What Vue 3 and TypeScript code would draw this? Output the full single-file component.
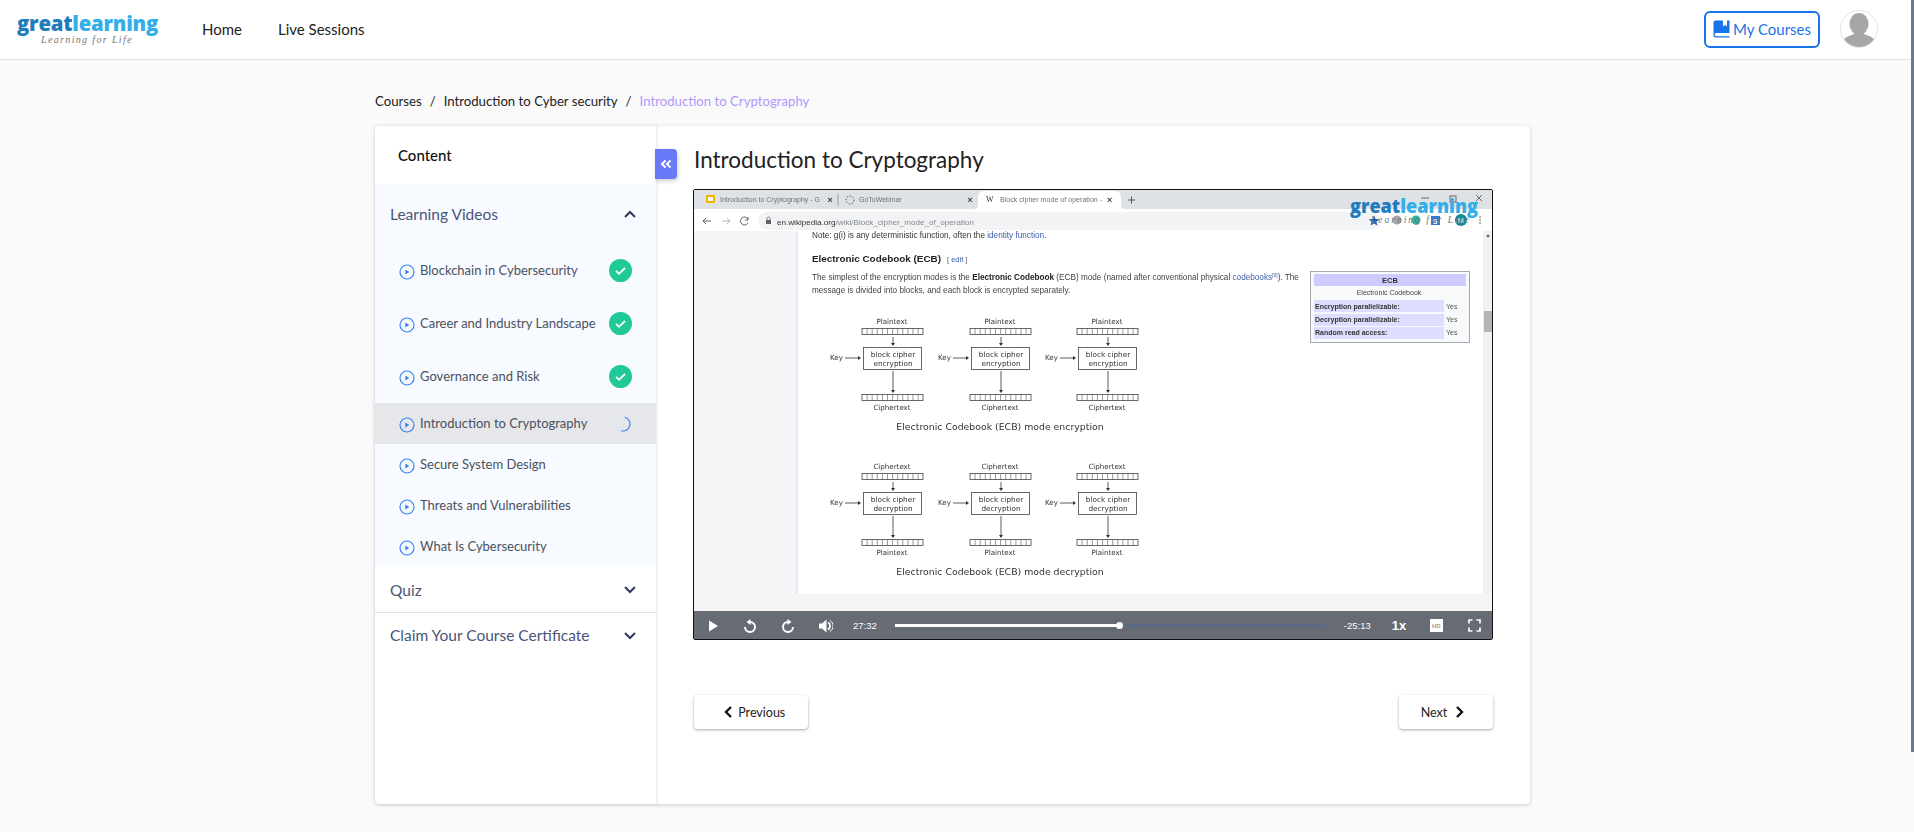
<script setup lang="ts">
const lessons = [
  { title: 'Blockchain in Cybersecurity', state: 'done' },
  { title: 'Career and Industry Landscape', state: 'done' },
  { title: 'Governance and Risk', state: 'done' },
  { title: 'Introduction to Cryptography', state: 'active' },
  { title: 'Secure System Design', state: '' },
  { title: 'Threats and Vulnerabilities', state: '' },
  { title: 'What Is Cybersecurity', state: '' },
]
const columns = [892, 1000, 1107]
const rows = [
  { y: 321, top: 'Plaintext', bottom: 'Ciphertext', op: 'encryption', caption: 'Electronic Codebook (ECB) mode encryption' },
  { y: 466, top: 'Ciphertext', bottom: 'Plaintext', op: 'decryption', caption: 'Electronic Codebook (ECB) mode decryption' },
]
const ticks = Array.from({ length: 11 }, (_, i) => (i + 1) * 5.1)
</script>

<template>
  <div class="page">
    <header class="topbar">
      <div class="left">
        <div class="logo">
          <div class="logo-main"><span class="great">great</span><span class="learning">learning</span></div>
          <div class="logo-tag">Learning for Life</div>
        </div>
        <nav class="nav">
          <a>Home</a>
          <a>Live Sessions</a>
        </nav>
      </div>
      <div class="right">
        <button class="courses">
          <svg width="17" height="18" viewBox="0 0 17 18"><path d="M2.500 0.500H10v6l2-1.500 2 1.500V0.500h2.500V13H3.200a1.600 1.600 0 0 0 0 3.200H16.500v1.300H2.500a2 2 0 0 1-2-2V2.500a2 2 0 0 1 2-2z" fill="#1a73e8"/></svg>
          <span>My Courses</span>
        </button>
        <div class="avatar">
          <svg width="36" height="36" viewBox="0 0 36 36">
            <defs><clipPath id="av"><circle cx="18" cy="18" r="18"/></clipPath></defs>
            <g clip-path="url(#av)" fill="#a6a6a6">
              <ellipse cx="18" cy="13" rx="9.500" ry="11"/>
              <path d="M0 36c0-7 4-10 13-13h10c9 3 13 6 13 13z"/>
            </g>
          </svg>
        </div>
      </div>
    </header>

    <main class="body">
      <div class="crumbs">
        <span>Courses</span><i>/</i><span>Introduction to Cyber security</span><i>/</i><span class="current">Introduction to Cryptography</span>
      </div>
      <section class="card">
        <aside class="side">
          <div class="side-head">Content</div>
          <div class="group open">
            <div class="group-title">
              <span>Learning Videos</span>
              <svg class="chev" width="14" height="9" viewBox="0 0 14 9"><path d="M2 7l5-5 5 5" fill="none" stroke="#2f3b5c" stroke-width="2"/></svg>
            </div>
            <ul class="lessons">
              <li v-for="l in lessons" :key="l.title" class="lesson" :class="[l.state]">
                <svg class="play" width="16" height="16" viewBox="0 0 16 16"><circle cx="8" cy="8" r="7" fill="none" stroke="#3b82f6" stroke-width="1.200"/><path d="M6.300 5.500v5l4-2.500z" fill="#3b82f6"/></svg>
                <span class="lesson-name">{{ l.title }}</span>
                <svg v-if="l.state === 'done'" class="check" width="23" height="23" viewBox="0 0 23 23"><circle cx="11.500" cy="11.500" r="11.500" fill="#20c997"/><path d="M7 11.800l3 3 6-5.800" fill="none" stroke="#fff" stroke-width="1.800"/></svg>
                <svg v-if="l.state === 'active'" class="spin" width="16" height="16" viewBox="0 0 16 16"><circle cx="8" cy="8" r="7" fill="none" stroke="#dbe6f7" stroke-width="1.200"/><path d="M8 1a7 7 0 0 1 0 14" fill="none" stroke="#3b82f6" stroke-width="1.200" transform="rotate(15 8 8)"/></svg>
              </li>
            </ul>
          </div>
          <div class="group-title closed">
            <span>Quiz</span>
            <svg class="chev" width="14" height="9" viewBox="0 0 14 9"><path d="M2 2l5 5 5-5" fill="none" stroke="#2f3b5c" stroke-width="2"/></svg>
          </div>
          <div class="group-title closed">
            <span>Claim Your Course Certificate</span>
            <svg class="chev" width="14" height="9" viewBox="0 0 14 9"><path d="M2 2l5 5 5-5" fill="none" stroke="#2f3b5c" stroke-width="2"/></svg>
          </div>
          <button class="collapse"><svg width="12" height="10" viewBox="0 0 12 10"><path d="M5.500 1.500L2 5l3.500 3.500M10.500 1.500L7 5l3.500 3.500" fill="none" stroke="#fff" stroke-width="2"/></svg></button>
        </aside>

        <div class="content">
          <h1>Introduction to Cryptography</h1>
          <div class="player">
            <svg class="frame" width="798" height="421" viewBox="694 190 798 421">
              <defs>
                <filter id="soft" x="-2%" y="-2%" width="104%" height="104%"><feGaussianBlur stdDeviation="0.42"/></filter>
              </defs>
              <g filter="url(#soft)" font-family="'Liberation Sans', Arial, sans-serif">
                <rect x="694" y="190" width="798" height="421" fill="#ffffff"/>
                <rect x="694" y="190" width="798" height="19" fill="#dee1e6"/>
                <path d="M974 209c4 0 4-3 4-6v-6c0-4 3-6 6-6h131c3 0 6 2 6 6v6c0 3 0 6 4 6z" fill="#fff"/>
                <rect x="706" y="195" width="9" height="8" rx="1" fill="#f4b400"/><rect x="708" y="197" width="5" height="4" fill="#fff"/>
                <text x="720" y="202" font-size="7" fill="#6f7377">Introduction to Cryptography - G</text>
                <text x="827.500" y="203" font-size="9" font-weight="700" fill="#444">×</text>
                <path d="M838 194v12" stroke="#9aa0a6"/>
                <circle cx="850" cy="200" r="4" fill="none" stroke="#555" stroke-dasharray="1.500 1.500"/>
                <text x="859" y="202" font-size="7" fill="#6f7377">GoToWebinar</text>
                <text x="967.500" y="203" font-size="9" font-weight="700" fill="#444">×</text>
                <text x="986" y="202" font-size="8" font-family="'Liberation Serif', serif" fill="#333">W</text>
                <text x="1000" y="202" font-size="7.100" fill="#6f7377">Block cipher mode of operation -</text>
                <text x="1107" y="203" font-size="9" font-weight="700" fill="#444">×</text>
                <path d="M1128 200h7M1131.500 196.500v7" stroke="#555" stroke-width="1"/>
                <rect x="694" y="209" width="798" height="22" fill="#fff"/>
                <rect x="758" y="212" width="622" height="18" rx="9" fill="#f1f3f4"/>
                <path d="M703 221h8M703 221l3-3M703 221l3 3" stroke="#5f6368" fill="none"/>
                <path d="M722 221h8M730 221l-3-3M730 221l-3 3" stroke="#b5b8bb" fill="none"/>
                <path d="M748 219a4 4 0 1 0 0 4M748 217v3h-3" stroke="#5f6368" fill="none"/>
                <rect x="766" y="220" width="5" height="4" fill="#5f6368"/><path d="M767 220v-1.500a1.500 1.500 0 0 1 3 0v1.500" stroke="#5f6368" fill="none" stroke-width="0.800"/>
                <text x="777" y="224.500" font-size="8.100"><tspan fill="#333">en.wikipedia.org</tspan><tspan fill="#85888c">/wiki/Block_cipher_mode_of_operation</tspan></text>
                <path d="M1374 215.500l1.500 3.500 3.800.3-2.900 2.400 1 3.700-3.400-2-3.400 2 1-3.700-2.900-2.400 3.800-.3z" fill="#1a62c4"/>
                <circle cx="1397" cy="220" r="4.500" fill="#a5a5a5"/>
                <circle cx="1416" cy="220" r="4.500" fill="#2bb59a"/>
                <rect x="1431" y="216" width="9" height="9" fill="#2b7cd3"/><text x="1433" y="224" font-size="7" font-weight="700" fill="#fff">S</text>
                <circle cx="1461" cy="220" r="6" fill="#0f8a99"/><text x="1458" y="223" font-size="7" fill="#fff">M</text>
                <circle cx="1480" cy="217" r=".8" fill="#555"/><circle cx="1480" cy="220" r=".8" fill="#555"/><circle cx="1480" cy="223" r=".8" fill="#555"/>
                <path d="M1421 198h8" stroke="#666"/><rect x="1450" y="196" width="6" height="6" fill="none" stroke="#666"/><path d="M1476 195l6 6M1482 195l-6 6" stroke="#666"/>

                <rect x="694" y="231" width="102.500" height="380" fill="#f4f3f6"/>
                <path d="M797 231v363" stroke="#e4ebf7" stroke-width="2"/>
                <rect x="694" y="594" width="798" height="17" fill="#f4f3f6"/>
                <rect x="1483" y="231" width="9" height="363" fill="#f1f1f1"/>
                <rect x="1484" y="311" width="8" height="21" fill="#b5b5b5"/>
                <path d="M1488 234l-2 3h4z" fill="#666"/>

                <text x="812" y="238" font-size="8.200" fill="#333">Note: g(i) is any deterministic function, often the <tspan fill="#3b5ea8">identity function</tspan>.</text>
                <text x="812" y="262" font-size="9.900" font-weight="700" fill="#222">Electronic Codebook (ECB)</text>
                <text x="947" y="262" font-size="7.500" fill="#666">[ <tspan fill="#3b5ea8">edit</tspan> ]</text>
                <text x="812" y="280" font-size="8.200" fill="#444">The simplest of the encryption modes is the <tspan font-weight="700" fill="#222">Electronic Codebook</tspan> (ECB) mode (named after conventional physical <tspan fill="#3b5ea8">codebooks</tspan><tspan font-size="5" dy="-3" fill="#3b5ea8">[9]</tspan><tspan dy="3">). The</tspan></text>
                <text x="812" y="293" font-size="8.200" fill="#444">message is divided into blocks, and each block is encrypted separately.</text>

                <rect x="1310.500" y="271.500" width="159" height="71" fill="#f8f9fa" stroke="#a2a9b1"/>
                <rect x="1314" y="274" width="152" height="12" fill="#ccccff"/>
                <text x="1390" y="283" font-size="7.500" font-weight="700" text-anchor="middle" fill="#333">ECB</text>
                <text x="1389" y="295" font-size="7" text-anchor="middle" fill="#444">Electronic Codebook</text>
                <rect x="1314" y="300" width="130" height="12" fill="#ddddff"/>
                <rect x="1314" y="314" width="130" height="12" fill="#ddddff"/>
                <rect x="1314" y="327" width="130" height="12" fill="#ddddff"/>
                <g font-size="7" fill="#333" font-weight="700">
                  <text x="1315" y="309">Encryption parallelizable:</text>
                  <text x="1315" y="322">Decryption parallelizable:</text>
                  <text x="1315" y="335">Random read access:</text>
                </g>
                <g font-size="7" fill="#555">
                  <text x="1446" y="309">Yes</text><text x="1446" y="322">Yes</text><text x="1446" y="335">Yes</text>
                </g>

                <g v-for="r in rows" :key="r.y" font-family="'DejaVu Sans', sans-serif">
                  <g v-for="c in columns" :key="c" :transform="`translate(${c} ${r.y})`" fill="#333">
                    <text x="0" y="3" font-size="7.100" text-anchor="middle">{{ r.top }}</text>
                    <rect x="-30" y="7.500" width="61" height="6" fill="#fff" stroke="#444" stroke-width=".8"/>
                    <path v-for="t in ticks" :key="t" :d="`M${t - 30} 7.500v6`" stroke="#555" stroke-width=".6"/>
                    <path d="M1 16v7" stroke="#333" stroke-width=".8"/><path d="M-1 22l2 3 2-3z"/>
                    <rect x="-28.500" y="26.500" width="58" height="22" fill="#fff" stroke="#444" stroke-width=".8"/>
                    <text x="1" y="35.500" font-size="7.300" text-anchor="middle">block cipher</text>
                    <text x="1" y="44.500" font-size="7.300" text-anchor="middle">{{ r.op }}</text>
                    <text x="-62" y="39" font-size="7.100">Key</text>
                    <path d="M-47 37h14" stroke="#333" stroke-width=".8"/><path d="M-34 35l3 2-3 2z"/>
                    <path d="M1 50v20" stroke="#333" stroke-width=".8"/><path d="M-1 69l2 3 2-3z"/>
                    <rect x="-30" y="73.500" width="61" height="6" fill="#fff" stroke="#444" stroke-width=".8"/>
                    <path v-for="t in ticks" :key="t" :d="`M${t - 30} 73.500v6`" stroke="#555" stroke-width=".6"/>
                    <text x="0" y="89" font-size="7.100" text-anchor="middle">{{ r.bottom }}</text>
                  </g>
                  <text x="1000" :y="r.y + 109" font-size="9.350" text-anchor="middle" fill="#333">{{ r.caption }}</text>
                </g>
              </g>
              <g font-family="'Open Sans', 'Liberation Sans', sans-serif" font-weight="800">
                <text x="1350" y="213" font-size="19.500" fill="#1f7cbd" textLength="128" lengthAdjust="spacingAndGlyphs"><tspan>great</tspan><tspan fill="#33aee8">learning</tspan></text>
              </g>
              <text x="1371" y="223" font-size="9.500" font-style="italic" font-family="'Liberation Serif', serif" letter-spacing="2" fill="#777">Learning for Life</text>
            </svg>
            <div class="controls">
              <svg class="ctl" width="12" height="12" viewBox="0 0 12 12"><path d="M2 .5l9 5.500-9 5.500z" fill="#fff"/></svg>
              <svg class="ctl" width="14" height="16" viewBox="0 0 14 16"><path d="M7 4a5 5 0 1 1-5 5" fill="none" stroke="#fff" stroke-width="2"/><path d="M7.500 1v6L3.500 4z" fill="#fff"/></svg>
              <svg class="ctl" width="14" height="16" viewBox="0 0 14 16"><path d="M7 4a5 5 0 1 0 5 5" fill="none" stroke="#fff" stroke-width="2"/><path d="M6.500 1v6l4-3z" fill="#fff"/></svg>
              <svg class="ctl" width="14" height="14" viewBox="0 0 14 14"><path d="M0 4.500h3l4.500-4v13l-4.500-4H0z" fill="#fff"/><path d="M9 3.500a4 4 0 0 1 0 7" fill="none" stroke="#fff" stroke-width="1.800"/><path d="M11 1.500a6.500 6.500 0 0 1 0 11" fill="none" stroke="#fff" stroke-width="1"/></svg>
              <span class="time first">27:32</span>
              <div class="track"><div class="fill" :style="{ width: '52%' }"></div><div class="knob"></div></div>
              <span class="time">-25:13</span>
              <span class="speed">1x</span>
              <span class="hd">HD</span>
              <svg class="full" width="13" height="13" viewBox="0 0 13 13"><path d="M1 4.500V1h3.500M8.500 1H12v3.500M12 8.500V12H8.500M4.500 12H1V8.500" fill="none" stroke="#fff" stroke-width="1.700"/></svg>
            </div>
          </div>
          <div class="pager">
            <button class="pg prev"><svg width="9" height="12" viewBox="0 0 9 12"><path d="M7 1L2 6l5 5" fill="none" stroke="#111" stroke-width="2.400"/></svg>Previous</button>
            <button class="pg next">Next<svg width="9" height="12" viewBox="0 0 9 12"><path d="M2 1l5 5-5 5" fill="none" stroke="#111" stroke-width="2.400"/></svg></button>
          </div>
        </div>
      </section>
    </main>
    <div class="scrollbar"></div>
  </div>
</template>

<style>
html, body { margin: 0; overflow: hidden; }
</style>

<style scoped>
* { box-sizing: border-box; }
.page { width: 1914px; height: 832px; position: relative; background: #fafafb; font-family: Lato, "Liberation Sans", sans-serif; overflow: hidden; }
.topbar { height: 60px; background: #fff; border-bottom: 1px solid #e0e0e0; display: flex; justify-content: space-between; align-items: center; padding: 0 36px 1px 17px; }
.left, .right { display: flex; align-items: center; }
.logo { width: 143px; display: flex; flex-direction: column; align-items: flex-start; margin-top: -2px; }
.logo-main { font-family: "Open Sans", sans-serif; font-weight: 800; font-size: 20.300px; line-height: 22px; letter-spacing: -0.2px; white-space: nowrap; }
.great { color: #1f7cbd; }
.learning { color: #33aee8; }
.logo-tag { font-family: "Liberation Serif", serif; font-style: italic; font-size: 10px; line-height: 11px; letter-spacing: 1.350px; color: #777; margin: 0 0 0 24px; }
.nav { display: flex; gap: 36px; margin-left: 42px; font-size: 15px; color: #222; }
.right { gap: 20px; }
.courses { width: 116px; height: 37px; border: 2px solid #1a73e8; border-radius: 6px; background: #fff; color: #1a73e8; font: 15px Lato, sans-serif; display: flex; align-items: center; gap: 3px; padding: 0 0 0 7px; }
.avatar { width: 38px; height: 38px; border: 1px solid #e5e5e5; border-radius: 50%; }
.avatar svg { display: block; }
.body { padding: 0 0 0 375px; }
.crumbs { height: 66px; display: flex; align-items: center; font-size: 13.200px; color: #222; padding-top: 15px; }
.crumbs i { font-style: normal; margin: 0 8px; }
.current { color: #b197fc; }
.card { width: 1155px; height: 678px; background: #fff; border-radius: 4px; box-shadow: 0 1px 4px rgba(0, 0, 0, .18); display: flex; }
.side { width: 282px; flex: none; position: relative; border-right: 1px solid #edeef2; box-shadow: 1px 0 3px rgba(0, 0, 0, .06); }
.side-head { height: 58px; padding: 20px 0 0 23px; font-size: 15px; font-weight: 500; color: #111; line-height: 18px; }
.group.open { background: #f7faff; height: 383px; }
.group-title { display: flex; justify-content: space-between; align-items: center; padding: 0 19px 0 15px; font-size: 15.500px; color: #4a5578; }
.open .group-title { height: 60px; }
.group-title.closed { height: 45px; }
.group-title.closed + .group-title.closed { border-top: 1px solid #dfe1e6; }
.lessons { list-style: none; margin: 0; padding: 0; }
.lesson { display: flex; align-items: center; color: #4b5160; font-size: 13px; padding: 0 25px 0 24px; height: 41px; }
.lesson.done { height: 53px; }
.lesson.active { background: #e5e7eb; }
.lesson-name { margin-left: 5px; flex: 1; white-space: nowrap; margin-top: -1px; }
.play { flex: none; margin-top: 2px; }
.check { margin-top: -1px; margin-right: -1px; flex: none; }
.collapse { position: absolute; left: 280px; top: 23px; width: 22px; height: 30px; border: 0; padding: 0; background: #6979f8; border-radius: 0 4px 4px 0; box-shadow: 1px 2px 4px rgba(0, 0, 0, .2); display: flex; align-items: center; justify-content: center; }
.content { flex: 1; padding: 0 0 0 36px; }
h1 { margin: 0 0 0 1px; height: 63px; padding-top: 19px; font-size: 22.500px; line-height: 30px; font-weight: 400; color: #222; }
.player { width: 800px; height: 451px; border: 1px solid #111; border-radius: 2px; overflow: hidden; background: #fff; }
.frame { display: block; }
.controls { height: 29px; background: #676b74; display: flex; align-items: center; color: #fff; font-family: "Liberation Sans", sans-serif; }
.ctl { margin-left: 13px; flex: none; margin-right: 11px; }
.time { font-size: 9.500px; }
.time.first { margin-left: 9px; }
.track { width: 430px; height: 3px; background: #5a6a85; margin: 0 19px 0 18px; position: relative; }
.fill { height: 3px; background: #fff; }
.knob { position: absolute; left: 221px; top: -2px; width: 7px; height: 7px; border-radius: 50%; background: #fff; }
.speed { font-size: 13px; font-weight: 700; margin-left: 21px; width: 38px; }
.hd { width: 13px; height: 13px; background: #fff; color: #999; font-size: 6px; font-weight: 700; display: flex; align-items: center; justify-content: center; }
.full { margin-left: 25px; }
.pager { display: flex; justify-content: space-between; margin: 55px 0 0 1px; width: 799px; }
.pg { height: 34px; background: #fff; border: 0; border-radius: 4px; box-shadow: 0 1px 3px rgba(0, 0, 0, .35); font: 12.500px Lato, sans-serif; color: #222; display: flex; align-items: center; justify-content: center; gap: 8px; }
.prev { width: 114px; padding-left: 13px; gap: 5.500px; }
.next { width: 94px; padding-right: 13px; }
.scrollbar { position: absolute; right: 0; top: 0; width: 3px; height: 752px; background: #6b7a90; }
</style>
